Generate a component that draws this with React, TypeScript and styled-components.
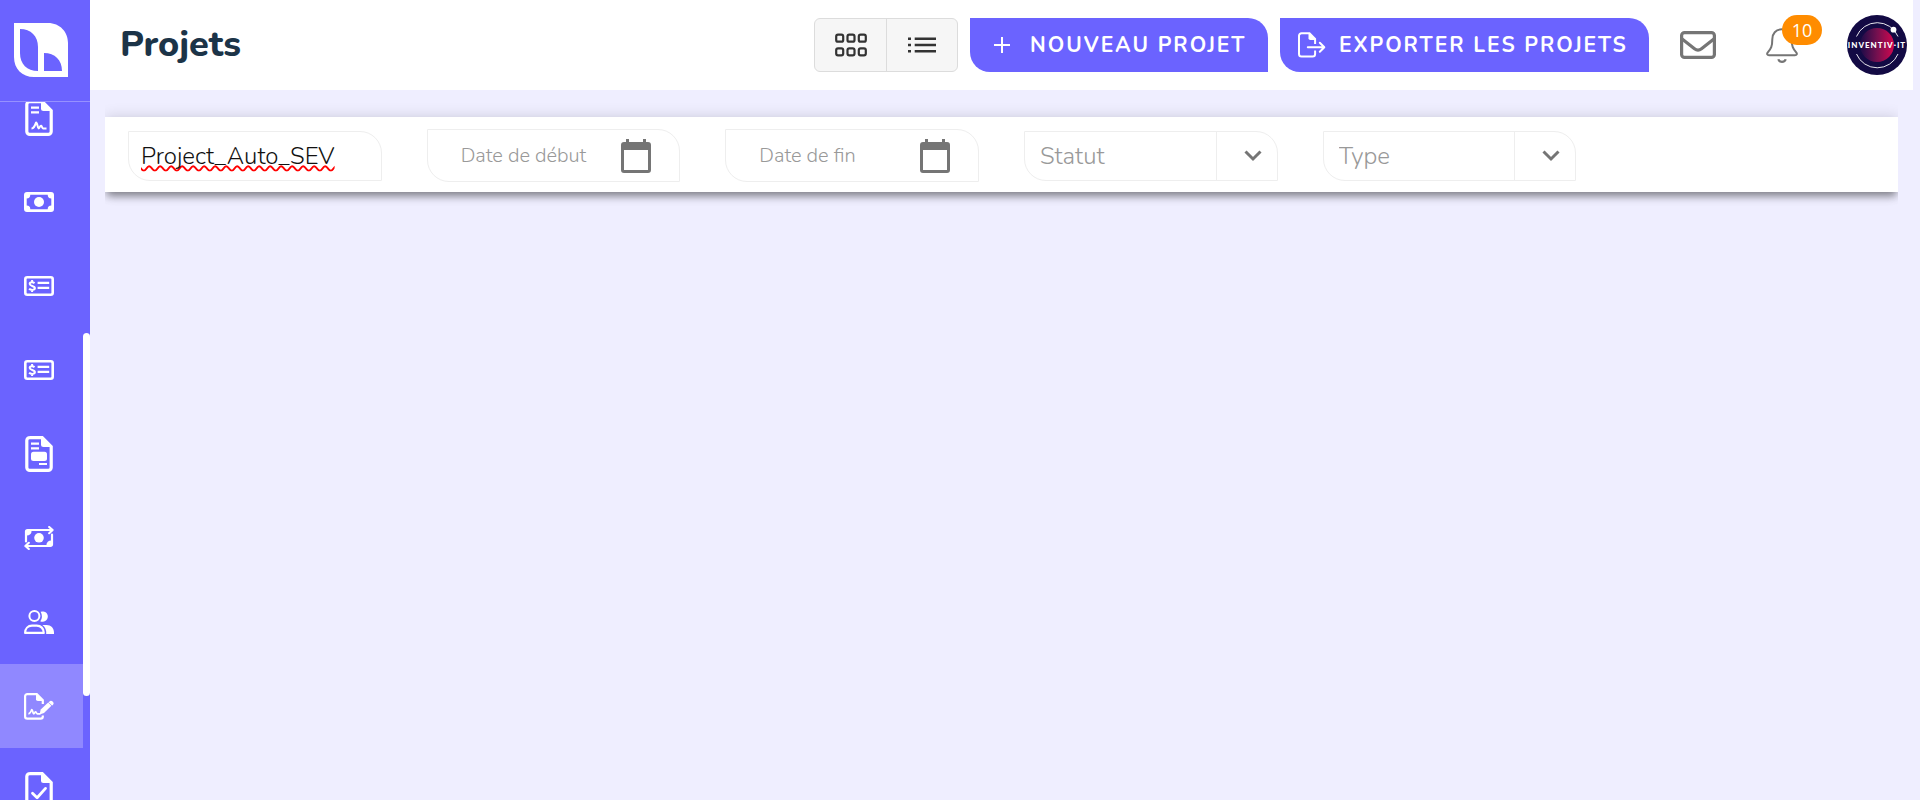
import React from "react";
import styled, { createGlobalStyle } from "styled-components";

const violet = "#6b63ff";
const grey = "#757575";

const GlobalStyle = createGlobalStyle`
  *, *::before, *::after { box-sizing: border-box; }
  body {
    margin: 0;
    background: #efeeff;
    font-family: Nunito, Lato, "Open Sans", sans-serif;
    color: #1c3448;
  }
  button, input, select { font-family: inherit; }
  button { cursor: pointer; }
  ul { list-style: none; margin: 0; padding: 0; }
`;

const Shell = styled.div`
  display: grid;
  grid-template-columns: 90px 1fr;
  height: 100vh;
  overflow: hidden;
`;

const Sidebar = styled.aside`
  display: flex;
  flex-direction: column;
  min-height: 0;
  background: ${violet};
`;

const LogoLink = styled.a`
  flex: none;
  display: block;
  height: 102px;
  padding: 23px 14px;
  border-bottom: 1px solid #9691ff;
`;

const NavArea = styled.nav`
  flex: 1;
  min-height: 0;
  display: grid;
  grid-template-columns: 1fr 7px;
  overflow: hidden;
`;

const NavList = styled.ul`
  margin-top: -26px;
`;

const NavLink = styled.a<{ $active?: boolean }>`
  display: flex;
  align-items: center;
  height: 84px;
  padding-left: 24px;
  background: ${(p) => (p.$active ? "#9088ff" : "transparent")};
`;

const IconSlot = styled.span`
  display: flex;
  justify-content: center;
  width: 30px;
`;

const ScrollTrack = styled.div`
  padding-top: 231px;
`;

const ScrollThumb = styled.div`
  height: 363px;
  border-radius: 4px;
  background: #fff;
`;

const Page = styled.div`
  min-width: 0;
  padding-right: 7px;
`;

const Header = styled.header`
  display: flex;
  align-items: center;
  height: 90px;
  padding: 0 6px 0 30px;
  background: #fff;
`;

const Title = styled.h1`
  flex: 1;
  margin: 0;
  font-size: 36px;
  line-height: 48px;
  font-weight: 800;
`;

const Toolbar = styled.div`
  display: flex;
  align-items: center;
  gap: 12px;
`;

const ViewToggle = styled.div`
  display: flex;
  width: 144px;
  height: 54px;
  border: 1px solid #dcdcdc;
  border-radius: 6px;
  background: #f6f6f6;
  overflow: hidden;
`;

const ToggleButton = styled.button`
  flex: 1;
  display: flex;
  align-items: center;
  justify-content: center;
  padding: 0 0 0 1px;
  border: 0;
  background: none;
  & + & { border-left: 1px solid #dcdcdc; }
`;

const ActionButton = styled.button<{ $gap: number; $width: number; $inset: number }>`
  display: flex;
  align-items: center;
  gap: ${(p) => p.$gap}px;
  width: ${(p) => p.$width}px;
  height: 54px;
  padding: 0 0 0 ${(p) => p.$inset}px;
  border: 0;
  border-radius: 0 20px 0 20px;
  background: ${violet};
  color: #fff;
  font-size: 21px;
  font-weight: 700;
  letter-spacing: 2px;
  white-space: nowrap;
`;

const Account = styled.div`
  display: flex;
  align-items: center;
  padding-left: 31px;
`;

const PlainButton = styled.button`
  position: relative;
  display: flex;
  padding: 0;
  border: 0;
  background: none;
`;

const BellButton = styled(PlainButton)`
  margin: 0 49px 0 50px;
`;

const Badge = styled.span`
  position: absolute;
  left: 16px;
  top: -13px;
  width: 40px;
  height: 30px;
  border-radius: 15px;
  background: #ff8c00;
  color: #fff;
  font-family: "Open Sans", sans-serif;
  font-size: 18px;
  line-height: 30px;
  text-align: center;
`;

const Filters = styled.form`
  display: grid;
  grid-template-columns: repeat(6, 1fr);
  align-items: center;
  height: 75px;
  margin: 27px 15px 0;
  padding: 2px 0 0 1px;
  background: #fff;
  box-shadow: 0 6px 8px -2px rgba(0, 0, 0, 0.42), 0 0 14px rgba(0, 0, 0, 0.14);
  clip-path: inset(-20px 0);
`;

const Field = styled.label<{ $tall?: boolean }>`
  display: flex;
  height: ${(p) => (p.$tall ? 53 : 50)}px;
  margin: 0 23px 0 22px;
  border: 1px solid #eee;
  border-radius: 0 22px 0 22px;
  overflow: hidden;
`;

const TextInput = styled.input`
  flex: 1;
  min-width: 0;
  padding: 0 0 0 12px;
  border: 0;
  outline: 0;
  background: none;
  color: #111;
  font-size: 24px;
  font-weight: 300;
  text-decoration: underline wavy #f00 2px;
  text-decoration-skip-ink: none;
  text-underline-offset: 1px;
`;

const DateInput = styled.input`
  flex: 1;
  min-width: 0;
  padding: 0 0 0 33px;
  border: 0;
  outline: 0;
  background: none;
  font-size: 20px;
  font-weight: 300;
  &::placeholder { color: #999; opacity: 1; }
`;

const CalendarButton = styled(PlainButton)`
  align-self: center;
  margin-right: 28px;
`;

const Select = styled.select`
  flex: 1;
  min-width: 0;
  padding: 0 0 0 15px;
  border: 0;
  outline: 0;
  appearance: none;
  background: none;
  color: #999;
  font-size: 24px;
  font-weight: 300;
`;

const Arrow = styled.span`
  display: flex;
  align-items: center;
  width: 61px;
  padding-left: 27px;
  border-left: 1px solid #eee;
`;

const Logo = () => (
  <svg width="54" height="54" viewBox="0 0 54 54" role="img" aria-label="Accueil">
    <path
      fill="#fff"
      fillRule="evenodd"
      d="M0 0H34C46 0 54 9 54 20V54H20C8 54 0 46 0 34ZM6 6V30C6 41 13 48 24 48V24C24 13 17 6 6 6ZM30 30V48H48C48 37 41 30 30 30Z"
    />
  </svg>
);

const FileIcon = ({ children }: { children: React.ReactNode }) => (
  <svg width="28" height="36" viewBox="0 0 28 36" fill="none" aria-hidden>
    <path
      d="M4.5 1.6H17.2L26.2 10.6V31.4a3 3 0 0 1-3 3H4.8a3 3 0 0 1-3-3V4.6a3 3 0 0 1 3-3Z"
      stroke="#fff"
      strokeWidth="3.2"
    />
    <path d="M16 1.5V8.5a2.5 2.5 0 0 0 2.5 2.5H27Z" fill="#fff" />
    {children}
  </svg>
);

const ContractIcon = () => (
  <FileIcon>
    <path d="M6 7.7h8M6 12.3h8" stroke="#fff" strokeWidth="2.2" />
    <path
      d="M6.5 28.6c2.4 0 3-2 4.6-6.2 1.4 0 1.2 5.4 2.6 6 1-.4 1.2-2.8 2.4-2.6.9.3 1 2.4 2 2.6h3.4"
      stroke="#fff"
      strokeWidth="2"
      strokeLinejoin="round"
    />
  </FileIcon>
);

const InvoiceIcon = () => (
  <FileIcon>
    <path d="M6 7.7h8M6 12.3h8M14 28h8" stroke="#fff" strokeWidth="2.2" />
    <rect x="6" y="15.7" width="16" height="9.4" rx="2.5" fill="#fff" />
  </FileIcon>
);

const FileCheckIcon = () => (
  <FileIcon>
    <path d="M7.5 21.2l4.6 4.6 8.4-9.4" stroke="#fff" strokeWidth="2.8" strokeLinecap="round" strokeLinejoin="round" />
  </FileIcon>
);

const MoneyIcon = () => (
  <svg width="30" height="20" viewBox="0 0 30 20" fill="#fff" aria-hidden>
    <path
      fillRule="evenodd"
      d="M3 0H27a3 3 0 0 1 3 3V17a3 3 0 0 1-3 3H3a3 3 0 0 1-3-3V3a3 3 0 0 1 3-3ZM6.3 2.8A3.6 3.6 0 0 1 2.7 6.4V13.6A3.6 3.6 0 0 1 6.3 17.2H23.7A3.6 3.6 0 0 1 27.3 13.6V6.4A3.6 3.6 0 0 1 23.7 2.8Z"
    />
    <circle cx="15" cy="10" r="5" />
  </svg>
);

const CheckIcon = () => (
  <svg width="30" height="20" viewBox="0 0 30 20" fill="none" stroke="#fff" aria-hidden>
    <rect x="1.3" y="1.3" width="27.4" height="17.4" rx="2" strokeWidth="2.6" />
    <path d="M13.6 6.9h11.6M13.6 11.9h11.6" strokeWidth="2.2" />
    <path
      d="M10.5 7.2C9.3 6 5.7 5.8 5.7 8s5.2 1.7 5.2 4.1-4.3 2.2-5.8.7M8.1 4v2.4M8.1 13.6V16"
      strokeWidth="2"
    />
  </svg>
);

const TransferIcon = () => (
  <svg width="30" height="24" viewBox="0 0 30 24" fill="none" stroke="#fff" aria-hidden>
    <path
      d="M2 15.5V5.5a1.5 1.5 0 0 1 1.5-1.5H28.6M25.2 1l3.4 3-3.4 3.2M28 8.5V18.5a1.5 1.5 0 0 1-1.5 1.5H1.4M4.8 16.8L1.4 20l3.4 3"
      strokeWidth="2.2"
      strokeLinecap="round"
      strokeLinejoin="round"
    />
    <path d="M2.5 4.5H7.6A4.8 4.8 0 0 1 2.5 9.6ZM27.5 19.5H22.4A4.8 4.8 0 0 1 27.5 14.4Z" fill="#fff" stroke="none" />
    <circle cx="15" cy="11.8" r="4.8" fill="#fff" stroke="none" />
  </svg>
);

const UsersIcon = () => (
  <svg width="30" height="24" viewBox="0 0 30 24" fill="none" aria-hidden>
    <circle cx="10.4" cy="6" r="5" stroke="#fff" strokeWidth="2" />
    <path d="M1.1 22.9C1.1 18.6 4 15.6 8 15.6h4.8c4 0 7 3 7 7.3Z" stroke="#fff" strokeWidth="2.2" strokeLinejoin="round" />
    <path d="M16.6 1.8A5.2 5.2 0 1 1 16.2 11.2C18.4 8.4 18.4 5 16.6 1.8Z" fill="#fff" />
    <path d="M18.4 15H22.5C27 15 30 18 30 22.5V24H22.2C22.6 20.5 21.4 17.2 18.4 15Z" fill="#fff" />
  </svg>
);

const SignatureIcon = () => (
  <svg width="30" height="27" viewBox="0 0 30 27" fill="none" aria-hidden>
    <path
      d="M18.8 22.5V23.5a2.2 2.2 0 0 1-2.2 2.2H3.3a2.2 2.2 0 0 1-2.2-2.2V3.3a2.2 2.2 0 0 1 2.2-2.2H12.8L18.8 7.2V11"
      stroke="#fff"
      strokeWidth="2.2"
    />
    <path d="M12 1V6.2A1.8 1.8 0 0 0 13.8 8H19.6L13 1Z" fill="#fff" />
    <path d="M15.6 21.4L16.7 16.6L24.2 9.6L27.4 12.8L20 20Z" fill="#fff" />
    <path d="M25.2 8.7a2.3 2.3 0 0 1 3.7 3.2l-.8.7-3.6-3.3Z" fill="#fff" />
    <path
      d="M4.4 20.8c2-.2 2.3-1.7 3.3-4.2 1.3 0 .9 3.8 2 4.2.9-.3 1-2 2-2 .8.2.8 1.9 1.7 2h3"
      stroke="#fff"
      strokeWidth="1.7"
      strokeLinejoin="round"
    />
  </svg>
);

const GridIcon = () => (
  <svg width="32" height="24" viewBox="0 0 32 24" fill="none" stroke="#333" strokeWidth="2.2" aria-hidden>
    {[1.2, 12.5, 23.8].map((x) =>
      [1.7, 15.3].map((y) => <rect key={`${x}-${y}`} x={x} y={y} width="7" height="7" rx="1.8" />)
    )}
  </svg>
);

const ListIcon = () => (
  <svg width="28" height="16" viewBox="0 0 28 16" stroke="#333" strokeWidth="2.6" aria-hidden>
    <path d="M0 1.7h3M0 8h3M0 14.3h3M6.7 1.7H28M6.7 8H28M6.7 14.3H28" />
  </svg>
);

const PlusIcon = () => (
  <svg width="16" height="16" viewBox="0 0 16 16" stroke="#fff" strokeWidth="2" aria-hidden>
    <path d="M8 0v16M0 8h16" />
  </svg>
);

const ExportIcon = () => (
  <svg width="28" height="26" viewBox="0 0 28 26" fill="none" stroke="#fff" strokeWidth="2" aria-hidden>
    <path d="M17.1 18.5V22a2.5 2.5 0 0 1-2.5 2.5H3.5A2.5 2.5 0 0 1 1 22V3.8a2.5 2.5 0 0 1 2.5-2.5H11.5L17.1 7V12" />
    <path d="M10.5 1V6.3A1.8 1.8 0 0 0 12.3 8.1H18L11.5 1Z" fill="#fff" stroke="none" />
    <path d="M9.8 15.3H26M21.8 10.8L26.3 15.3L21.8 19.8" strokeLinecap="round" strokeLinejoin="round" />
  </svg>
);

const MailIcon = () => (
  <svg width="36" height="28" viewBox="0 0 36 28" fill="none" stroke={grey} strokeWidth="3.2" aria-hidden>
    <rect x="1.6" y="1.6" width="32.8" height="24.8" rx="3" />
    <path d="M1.5 7.5L14.5 17.8C16.8 19.6 19.2 19.6 21.5 17.8L34.5 7.5" />
  </svg>
);

const BellIcon = () => (
  <svg width="32" height="35" viewBox="0 0 32 35" fill="none" stroke={grey} strokeWidth="2" aria-hidden>
    <path
      d="M16 1.3C9.6 1.3 6.3 5.8 6.3 11.2C6.3 18.5 5 20.4 1.8 24.3C.5 26 1.3 27.3 3 27.3H29C30.7 27.3 31.5 26 30.2 24.3C27 20.4 25.7 18.5 25.7 11.2C25.7 5.8 22.4 1.3 16 1.3Z"
      strokeLinejoin="round"
    />
    <path d="M12.3 31.3C13.3 34.7 18.7 34.7 19.7 31.3" strokeWidth="2.2" />
  </svg>
);

const Avatar = () => (
  <svg width="60" height="60" viewBox="0 0 60 60" role="img" aria-label="Inventiv-IT">
    <defs>
      <linearGradient id="planet" x1="0" x2="1">
        <stop offset="0" stopColor="#1a0b48" />
        <stop offset="0.5" stopColor="#74104f" />
        <stop offset="1" stopColor="#d2074f" />
      </linearGradient>
    </defs>
    <circle cx="30" cy="30" r="30" fill="#130a44" />
    <circle cx="30" cy="30" r="17" fill="url(#planet)" />
    <path d="M9.5 21.5A22.5 22.5 0 0 1 51 21.5M9.5 39A22.5 22.5 0 0 0 51 39" fill="none" stroke="#fff" strokeWidth="0.9" />
    <circle cx="46.5" cy="14.7" r="2.9" fill="#fff" />
    <text x="30" y="33" textAnchor="middle" fill="#fff" fontFamily="Lato, sans-serif" fontWeight="900" fontSize="8" letterSpacing="1">
      INVENTIV·IT
    </text>
  </svg>
);

const CalendarIcon = () => (
  <svg width="30" height="34" viewBox="0 0 30 34" aria-hidden>
    <path
      fill={grey}
      fillRule="evenodd"
      d="M5 0H8V3H22V0H25V3H27a3 3 0 0 1 3 3V31a3 3 0 0 1-3 3H3a3 3 0 0 1-3-3V6a3 3 0 0 1 3-3H5ZM3 11V31H27V11Z"
    />
  </svg>
);

const ChevronIcon = () => (
  <svg width="18" height="12" viewBox="0 0 18 12" fill="none" stroke={grey} strokeWidth="3" aria-hidden>
    <path d="M1.5 1.5L9 9L16.5 1.5" />
  </svg>
);

const navItems = [
  { label: "Contrats", Icon: ContractIcon },
  { label: "Paiements", Icon: MoneyIcon },
  { label: "Chèques", Icon: CheckIcon },
  { label: "Notes de frais", Icon: CheckIcon },
  { label: "Factures", Icon: InvoiceIcon },
  { label: "Virements", Icon: TransferIcon },
  { label: "Clients", Icon: UsersIcon },
  { label: "Projets", Icon: SignatureIcon, active: true },
  { label: "Validations", Icon: FileCheckIcon },
];

export default function App() {
  return (
    <>
      <GlobalStyle />
      <Shell>
        <Sidebar>
          <LogoLink href="#">
            <Logo />
          </LogoLink>
          <NavArea>
            <NavList>
              {navItems.map(({ label, Icon, active }) => (
                <li key={label}>
                  <NavLink href="#" $active={active} aria-label={label}>
                    <IconSlot>
                      <Icon />
                    </IconSlot>
                  </NavLink>
                </li>
              ))}
            </NavList>
            <ScrollTrack>
              <ScrollThumb />
            </ScrollTrack>
          </NavArea>
        </Sidebar>
        <Page>
          <Header>
            <Title>Projets</Title>
            <Toolbar>
              <ViewToggle>
                <ToggleButton type="button" aria-label="Vue grille">
                  <GridIcon />
                </ToggleButton>
                <ToggleButton type="button" aria-label="Vue liste">
                  <ListIcon />
                </ToggleButton>
              </ViewToggle>
              <ActionButton type="button" $gap={20} $width={298} $inset={24}>
                <PlusIcon />
                NOUVEAU PROJET
              </ActionButton>
              <ActionButton type="button" $gap={13} $width={369} $inset={18}>
                <ExportIcon />
                EXPORTER LES PROJETS
              </ActionButton>
            </Toolbar>
            <Account>
              <PlainButton type="button" aria-label="Messages">
                <MailIcon />
              </PlainButton>
              <BellButton type="button" aria-label="Notifications">
                <BellIcon />
                <Badge>10</Badge>
              </BellButton>
              <PlainButton type="button" aria-label="Compte">
                <Avatar />
              </PlainButton>
            </Account>
          </Header>
          <main>
            <Filters>
              <Field>
                <TextInput aria-label="Nom du projet" defaultValue="Project_Auto_SEV" spellCheck={false} />
              </Field>
              <Field $tall>
                <DateInput aria-label="Date de début" placeholder="Date de début" />
                <CalendarButton type="button" aria-label="Choisir la date de début">
                  <CalendarIcon />
                </CalendarButton>
              </Field>
              <Field $tall>
                <DateInput aria-label="Date de fin" placeholder="Date de fin" />
                <CalendarButton type="button" aria-label="Choisir la date de fin">
                  <CalendarIcon />
                </CalendarButton>
              </Field>
              <Field>
                <Select aria-label="Statut" defaultValue="">
                  <option value="">Statut</option>
                </Select>
                <Arrow>
                  <ChevronIcon />
                </Arrow>
              </Field>
              <Field>
                <Select aria-label="Type" defaultValue="">
                  <option value="">Type</option>
                </Select>
                <Arrow>
                  <ChevronIcon />
                </Arrow>
              </Field>
            </Filters>
          </main>
        </Page>
      </Shell>
    </>
  );
}
